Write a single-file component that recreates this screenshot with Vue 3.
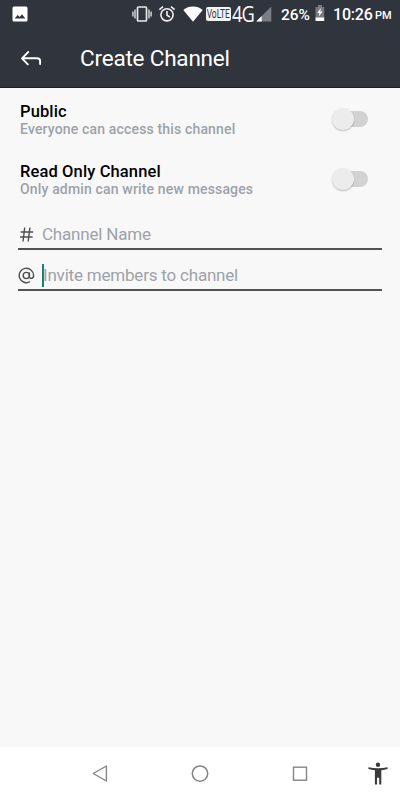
<script setup>
import { ref } from 'vue'

const options = ref([
  { title: 'Public', hint: 'Everyone can access this channel' },
  { title: 'Read Only Channel', hint: 'Only admin can write new messages' }
])
</script>

<template>
  <div class="screen">
    <header class="top">
      <div class="status">
        <svg class="s-image" width="16" height="16" viewBox="0 0 16 16"><path fill="#fff" fill-rule="evenodd" d="M2 .5h12A1.500 1.500 0 0 1 15.500 2v12a1.500 1.500 0 0 1-1.500 1.500H2A1.500 1.500 0 0 1 .5 14V2A1.500 1.500 0 0 1 2 .5zM2.700 12.500h10.600L10 8.300 7.700 11 5.700 9z" /></svg>
        <svg class="s-vibrate" width="20" height="18" viewBox="0 0 20 18" fill="none" stroke="#e8e9eb"><rect x="5.500" y="2" width="9" height="14" rx="1" stroke-width="1.700" /><path d="M3 4.500v9M17 4.500v9M.9 6.500v5M19.100 6.500v5" stroke-width="1.300" /></svg>
        <svg class="s-alarm" width="18" height="18" viewBox="0 0 18 18" fill="none" stroke="#f1f1f2" stroke-width="1.600"><circle cx="9" cy="9.800" r="6.100" /><path d="M9 6v4.200l3 1.900M1.400 4.700 5 1.700M16.600 4.700 13 1.700" /></svg>
        <svg class="s-wifi" width="20" height="16" viewBox="0 0 20 16"><path fill="#fff" d="M.3 3.900C5.800-.6 14.200-.6 19.700 3.900L10 15.800z" /></svg>
        <span class="volte"><span class="volte-text">VoLTE</span></span>
        <span class="net">4G</span>
        <svg class="s-signal" width="16" height="16" viewBox="0 0 16 16"><path fill="#7b7e84" d="M15.300.5v15H.3z" /><path fill="#fff" d="M5.700 10v5.500H.3z" /></svg>
        <span class="percent">26%</span>
        <svg class="s-battery" width="10" height="17" viewBox="0 0 10 17"><path fill="#777a80" d="M3 0h4v2h2.200v11H.5V2H3z" /><path fill="#fff" d="M.5 12.500h8.700V16H.5zM5.800 3 2.200 7.900h2.200l-.6 3.600 3.700-5H5.300z" /></svg>
        <span class="time">10:26</span>
        <span class="pm">PM</span>
      </div>
      <div class="bar">
        <svg class="back" width="22" height="18" viewBox="0 0 22 18" fill="none" stroke="#fff" stroke-width="1.900" stroke-linecap="round" stroke-linejoin="round"><path d="M8.300 2 2 8.300l5.800 6M2.300 8.300H17q3.100 0 3.100 2.800v3" /></svg>
        <h1>Create Channel</h1>
      </div>
    </header>

    <main>
      <section v-for="o in options" :key="o.title" class="option">
        <div>
          <div class="title">{{ o.title }}</div>
          <div class="hint">{{ o.hint }}</div>
        </div>
        <div class="switch"><div class="knob"></div></div>
      </section>

      <div class="field first">
        <svg width="17" height="17" viewBox="0 0 17 17" fill="none" stroke="#4f4f4f" stroke-width="1.400"><path d="M6.700 1.500 5 15.500M11.900 1.500l-1.700 14M2.600 6h12.600M2 11h12.600" /></svg>
        <span class="placeholder name">Channel Name</span>
      </div>
      <div class="field second">
        <svg width="17" height="17" viewBox="0 0 17 17" fill="none" stroke="#4f4f4f" stroke-width="1.400"><circle cx="8.300" cy="8.500" r="3.100" /><path d="M11.400 5.400v4.100c0 2.700 4.200 2.500 4.200-1.100A7.200 7.200 0 1 0 12 14.700" /></svg>
        <span class="cursor"></span>
        <span class="placeholder invite">Invite members to channel</span>
      </div>
    </main>

    <nav>
      <svg class="n-back" width="18" height="20" viewBox="0 0 18 20" fill="none" stroke="#858585" stroke-width="1.400" stroke-linejoin="round"><path d="M15.400 2v15L2.200 9.500z" /></svg>
      <svg class="n-home" width="18" height="18" viewBox="0 0 18 18"><circle cx="9" cy="8.600" r="7.700" fill="none" stroke="#858585" stroke-width="1.500" /></svg>
      <svg class="n-recent" width="16" height="16" viewBox="0 0 16 16"><rect x="1.500" y="1.200" width="13" height="13" fill="none" stroke="#858585" stroke-width="1.400" /></svg>
      <svg class="n-access" width="20" height="23" viewBox="0 0 20 23" fill="#3b3b3b"><circle cx="10" cy="2.700" r="2.200" /><path d="M.4 5.200Q10 7.400 19.600 5.200v1.900q-3 .9-6.300 1.200V22.500h-2.100v-6.700H9v6.700H6.900V8.300Q3.400 8 .4 7.100z" /></svg>
    </nav>
  </div>
</template>

<style>
body { margin: 0; }
</style>

<style scoped>
.screen {
  display: flex;
  flex-direction: column;
  width: 400px;
  height: 800px;
  background: #f8f8f8;
  font-family: Roboto, "Liberation Sans", sans-serif;
  overflow: hidden;
}
svg { display: block; flex: none; }
span, h1, .title, .hint { white-space: nowrap; }
.top {
  box-sizing: border-box;
  height: 88px;
  background: #2f343d;
  border-bottom: 1px solid #1d1e2b;
  color: #fff;
}
.status { display: flex; align-items: center; height: 28px; padding-left: 12px; box-sizing: border-box; }
.status > * { flex: none; }
.s-image { margin-right: 104px; margin-top: -1px; }
.s-vibrate { margin-right: 6px; margin-top: -1px; }
.s-alarm { margin-right: 7px; margin-top: -1px; }
.s-wifi { margin-right: 3px; margin-top: -1px; }
.volte {
  width: 25px;
  height: 14px;
  margin-right: 1px;
  border-radius: 2px;
  background: #f4f4f4;
  color: #30353e;
}
.volte-text {
  display: block;
  width: 34px;
  padding-left: 1px;
  font: 400 12px/15px Roboto, sans-serif;
  transform: scaleX(0.7);
  transform-origin: 0 0;
}
.net {
  width: 21px;
  margin-right: 3px;
  font-family: "Open Sans", sans-serif;
  font-size: 21px;
  line-height: 28px;
  letter-spacing: -1px;
  transform: scaleX(0.87);
  transform-origin: 0 50%;
}
.s-signal { margin-right: 9px; margin-top: -1px; }
.percent { width: 34px; margin-top: 1px; font-size: 15.500px; font-weight: 500; letter-spacing: -0.1px; }
.s-battery { margin-right: 8px; margin-top: -1px; }
.time { width: 42px; font-size: 16px; font-weight: 500; letter-spacing: -0.2px; }
.pm { font-size: 11px; font-weight: 500; margin-top: 3px; }
.bar { display: flex; align-items: center; height: 60px; padding-left: 20px; }
.back { margin-right: 38px; margin-top: 1px; }
h1 { margin: 0; font-size: 22.500px; font-weight: 400; line-height: 30px; letter-spacing: -0.2px; }
main { flex: 1; padding-top: 13px; }
.option { display: flex; justify-content: space-between; height: 60px; padding: 0 32px 0 20px; }
.title { padding-top: 1px; font-size: 16.500px; font-weight: 500; line-height: 19px; letter-spacing: 0.12px; color: #000; }
.hint { font-size: 14px; font-weight: 500; line-height: 16px; letter-spacing: 0.16px; color: #9da2a9; }
.switch { box-sizing: border-box; width: 34px; height: 16px; margin-top: 10px; border-radius: 8px; background: #d2d2d2; }
.knob { width: 22px; height: 22px; margin: -3px 0 0 -2px; border-radius: 50%; background: #ececec; box-shadow: 0 1px 1.500px rgba(0, 0, 0, 0.25); }
.switch::before { content: ""; display: table; }
.field {
  display: flex;
  align-items: center;
  box-sizing: border-box;
  width: 364px;
  margin-left: 18px;
  border-bottom: 2px solid #555254;
}
.first { height: 29px; }
.second { height: 41px; padding-top: 12px; }
.placeholder { margin-bottom: 2px; font-size: 17px; line-height: 22px; letter-spacing: -0.2px; color: #9da2a9; }
.name { margin-left: 7px; }
.cursor { width: 2px; height: 23px; margin-left: 7px; background: #168273; }
.invite { margin-left: -1px; }
nav { display: flex; align-items: center; height: 53px; background: #fff; }
.n-back { margin-left: 91px; }
.n-home { margin-left: 82px; }
.n-recent { margin-left: 83px; }
.n-access { margin-left: 60px; }
</style>
